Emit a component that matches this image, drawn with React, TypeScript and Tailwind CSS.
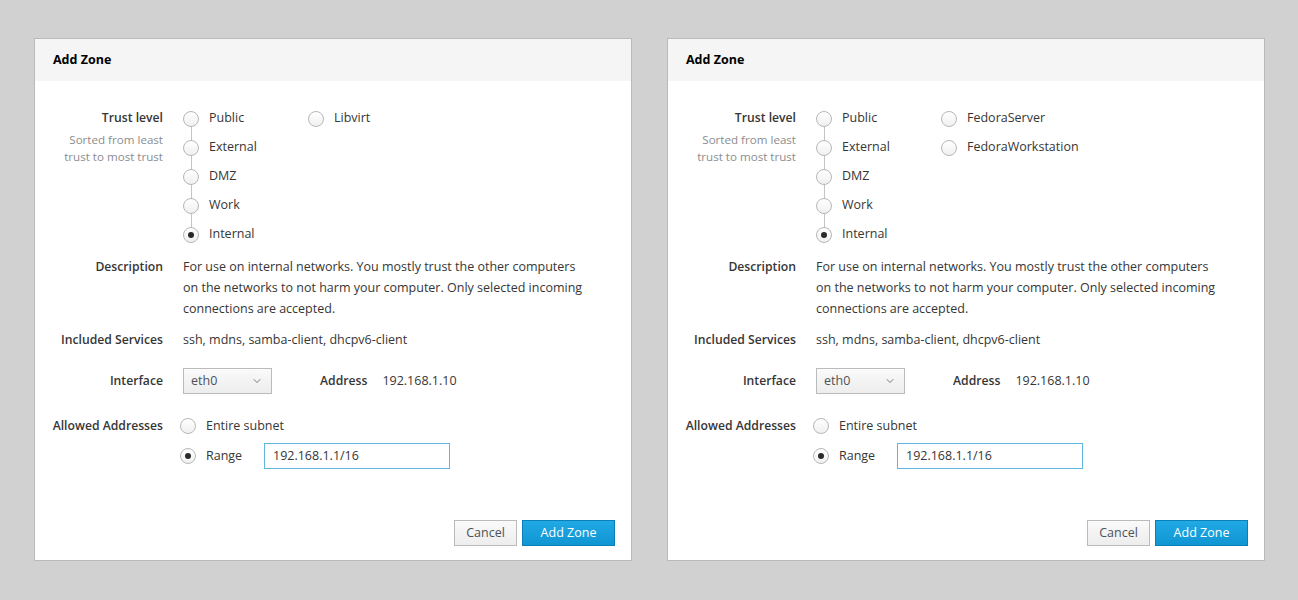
import { ChevronDown } from 'lucide-react';

interface ZoneProps
{
	extra: string[];
}

const trustLevels = ['Public', 'External', 'DMZ', 'Work', 'Internal'];

function Radio({ checked }: { checked?: boolean })
{
	return (
		<span className="relative z-10 flex h-4 w-4 flex-none items-center justify-center rounded-full border border-[#b7b7b7] bg-gradient-to-b from-white to-[#f0f0f0]">
			{checked && <span className="h-[6px] w-[6px] rounded-full bg-[#292929]" />}
		</span>
	);
}

function Label({ children }: { children: React.ReactNode })
{
	return <div className="whitespace-nowrap text-right text-[12.2px] font-semibold text-[#363636]">{children}</div>;
}

function ZoneDialog({ extra }: ZoneProps)
{
	return (
		<div className="flex h-[523px] w-[598px] flex-col border border-[#bababa] bg-white">
			<div className="flex h-[42px] items-center bg-[#f5f5f5] px-[18px] text-[12.5px] font-bold text-black">
				Add Zone
			</div>

			<div className="grid grid-cols-[110px_1fr] gap-x-[20px] px-[18px] pt-[23px] text-[12.5px] text-[#363636]">
				{/* trust level */}
				<div className="pt-[5px]">
					<Label>Trust level</Label>
					<div className="mt-[4px] text-right text-[11.6px] leading-[17px] text-[#8b8d8f]">
						Sorted from least<br />trust to most trust
					</div>
				</div>
				<div className="flex">
					<div className="w-[125px]">
						{trustLevels.map((t, i) => (
							<div key={t} className="flex h-[29px] items-center gap-[10px]">
								<div className="relative">
									<Radio checked={t === 'Internal'} />
									{i < trustLevels.length - 1 && (
										<span className="absolute left-[7.5px] top-[15px] h-[15px] w-px bg-[#c4c4c4]" />
									)}
								</div>
								<span>{t}</span>
							</div>
						))}
					</div>
					<div>
						{extra.map(t => (
							<div key={t} className="flex h-[29px] items-center gap-[10px]">
								<Radio />
								<span>{t}</span>
							</div>
						))}
					</div>
				</div>

				{/* description */}
				<div className="mt-[7px] leading-[21px]"><Label>Description</Label></div>
				<div className="mt-[7px] max-w-[405px] leading-[21px]">
					For use on internal networks. You mostly trust the other computers on the networks to not harm your computer. Only selected incoming connections are accepted.
				</div>

				<div className="mt-[10px] leading-[21px]"><Label>Included Services</Label></div>
				<div className="mt-[10px] leading-[21px]">ssh, mdns, samba-client, dhcpv6-client</div>

				<div className="mt-[18px] flex h-[26px] items-center justify-end"><Label>Interface</Label></div>
				<div className="mt-[18px] flex h-[26px] items-center">
					<div className="flex h-[26px] w-[89px] items-center justify-between border border-[#bbbbbb] bg-gradient-to-b from-[#fafafa] to-[#ededed] pl-[7px] pr-[8px] text-[#4d5258]">
						<span>eth0</span>
						<ChevronDown className="h-3 w-3 text-[#4d5258]" strokeWidth={1.5} />
					</div>
					<span className="ml-[48px] text-[12.2px] font-semibold">Address</span>
					<span className="ml-[15px]">192.168.1.10</span>
				</div>

				<div className="mt-[19px] flex h-[26px] items-center justify-end"><Label>Allowed Addresses</Label></div>
				<div className="mt-[19px] -ml-[3px] flex flex-col gap-[4px]">
					<div className="flex h-[26px] items-center gap-[10px]">
						<Radio />
						<span>Entire subnet</span>
					</div>
					<div className="flex h-[26px] items-center gap-[10px]">
						<Radio checked />
						<span className="w-[48px]">Range</span>
						<div className="flex h-[26px] w-[186px] items-center border border-[#5fb5e0] bg-white px-[8px]">
							192.168.1.1/16
						</div>
					</div>
				</div>
			</div>

			<div className="mt-auto flex justify-end gap-[5px] px-[16px] pb-[14px] text-[12.5px]">
				<button className="h-[26px] w-[63px] border border-[#bbbbbb] bg-gradient-to-b from-[#fafafa] to-[#ededed] text-[#4d5258]">
					Cancel
				</button>
				<button className="h-[26px] w-[93px] border border-[#0b7fb7] bg-gradient-to-b from-[#20a9e6] to-[#0f95d2] text-white">
					Add Zone
				</button>
			</div>
		</div>
	);
}

export default function App()
{
	return (
		<div className="flex min-h-[600px] gap-[35px] bg-[#d1d1d1] pl-[34px] pt-[38px] font-['Open_Sans',sans-serif]">
			<ZoneDialog extra={['Libvirt']} />
			<ZoneDialog extra={['FedoraServer', 'FedoraWorkstation']} />
		</div>
	);
}
